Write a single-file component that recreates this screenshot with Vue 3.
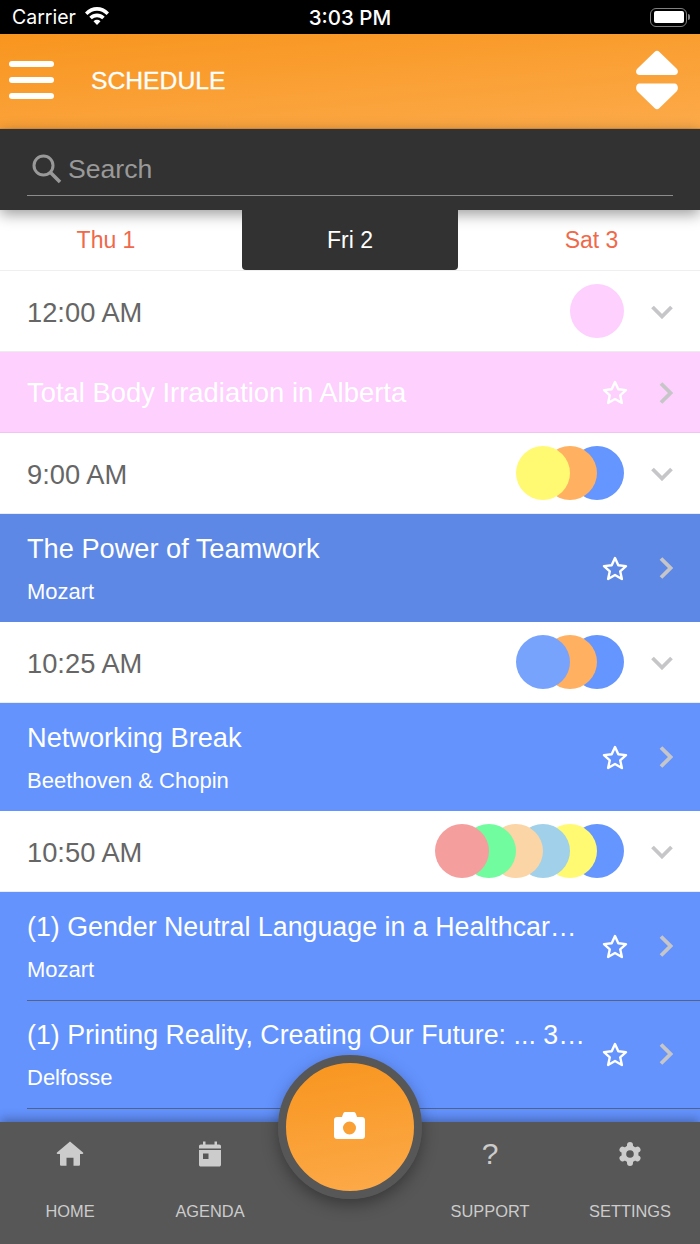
<template>
  <div class="page">
    <div class="status-bar">
      <div class="status-left">
        <span>Carrier</span>
        <svg class="wifi" width="26" height="19" viewBox="0 0 26 19">
          <path d="M1 6.500C8-.8 18-.8 25 6.500l-2.400 2.500C17 3.300 9 3.300 3.400 9z" fill="#fff" />
          <path d="M5.300 10.800c4.500-4.300 10.900-4.300 15.400 0l-2.500 2.500c-3.200-2.800-7.200-2.800-10.400 0z" fill="#fff" />
          <path d="M9.500 15.200c2.200-1.800 4.800-1.800 7 0L13 19z" fill="#fff" />
        </svg>
      </div>
      <span class="status-time">3:03 PM</span>
      <div class="battery">
        <div class="battery-body"><div class="battery-fill"></div></div>
        <div class="battery-tip"></div>
      </div>
    </div>

    <header class="app-header">
      <div class="burger"><i></i><i></i><i></i></div>
      <h1 class="app-title">SCHEDULE</h1>
      <svg class="sort" width="44" height="60" viewBox="0 0 44 60">
        <path d="M19.500 2a3.500 3.500 0 0 1 5 0L41.500 18.500C44 21 43 25 39.500 25H4.500C1 25 0 21 2.500 18.500z" fill="#fff" />
        <path d="M19.500 58a3.500 3.500 0 0 0 5 0L41.500 41.500C44 39 43 33.500 39.500 33.500H4.500C1 33.500 0 39 2.500 41.500z" fill="#fff" />
      </svg>
    </header>

    <div class="search-bar">
      <div class="search-field">
        <svg width="32" height="32" viewBox="0 0 32 32" fill="none" stroke="#999" stroke-width="3">
          <circle cx="13.500" cy="12.500" r="9.500" />
          <path d="M20.500 19.500L30 29" stroke-width="3.600" />
        </svg>
        <span>Search</span>
      </div>
    </div>

    <div class="day-tabs">
      <div v-for="d in days" :key="d" class="day-tab" :class="{ active: d === 'Fri 2' }">{{ d }}</div>
    </div>

    <div class="list">
      <template v-for="g in groups" :key="g.time">
        <div class="time-row">
          <span class="time">{{ g.time }}</span>
          <div class="dots">
            <span v-for="(c, i) in g.dots" :key="i" class="dot" :style="{ background: c, zIndex: g.dots.length - i }"></span>
          </div>
          <svg class="chev-down" width="22" height="14" viewBox="0 0 22 14" fill="none" stroke="#c6c6c8" stroke-width="3.800">
            <path d="M1.500 2L11 11.500 20.500 2" />
          </svg>
        </div>
        <div v-for="s in g.sessions" :key="s.title" class="session" :class="{ single: !s.sub }" :style="{ background: g.color }">
          <div class="session-inner" :class="{ ruled: s.ruled }">
            <div class="session-text">
              <div class="session-title">{{ s.title }}</div>
              <div v-if="s.sub" class="session-sub">{{ s.sub }}</div>
            </div>
            <svg class="star" width="26" height="25" viewBox="0 0 26 25" fill="none" stroke="#fff" stroke-width="2.400" stroke-linejoin="round">
              <path d="M13 2l3.300 7.300 7.700.800-5.800 5.200 1.700 7.700L13 19l-6.900 4 1.700-7.700L2 10.100l7.700-.800z" />
            </svg>
            <svg class="chev-right" width="14" height="22" viewBox="0 0 14 22" fill="none" stroke="#c6c6c8" stroke-width="3.800">
              <path d="M2 1.500L11.500 11 2 20.500" />
            </svg>
          </div>
        </div>
      </template>
    </div>

    <nav class="tab-bar">
      <div class="tab">
        <svg width="28" height="26" viewBox="0 0 28 26" fill="#ccc">
          <path d="M14 0.500L27 11.500c.6.700.2 1.500-.6 1.500H24v10.500c0 .8-.6 1.300-1.300 1.300H17.500v-8h-7v8H5.300C4.600 24.800 4 24.300 4 23.500V13H1.600C.8 13 .4 12.200 1 11.500z" />
        </svg>
        <span>HOME</span>
      </div>
      <div class="tab">
        <svg width="22" height="25" viewBox="0 0 22 25" fill="#ccc">
          <path d="M4 0h2.500v3H15.500V0H18v3h2.200C21.200 3 22 3.800 22 4.800V7H0V4.800C0 3.800.8 3 1.800 3H4z" />
          <path fill-rule="evenodd" d="M0 8.500h22v14.700c0 1-.8 1.800-1.800 1.800H1.800C.8 25 0 24.200 0 23.200zM4 12v5.500h5.500V12z" />
        </svg>
        <span>AGENDA</span>
      </div>
      <div class="tab-gap"></div>
      <div class="tab">
        <span class="help">?</span>
        <span>SUPPORT</span>
      </div>
      <div class="tab">
        <svg width="24" height="24" viewBox="0 0 24 24">
          <circle cx="12" cy="12" r="8.500" fill="#ccc" />
          <path d="M12 3V21M4.500 7.700L19.500 16.300M4.500 16.300L19.500 7.700" stroke="#ccc" stroke-width="6" stroke-linecap="round" />
          <circle cx="12" cy="12" r="3.800" fill="#575757" />
        </svg>
        <span>SETTINGS</span>
      </div>
      <button class="fab">
        <svg width="31" height="27" viewBox="0 0 31 27">
          <path fill="#fff" fill-rule="evenodd" d="M11.500 0h8c1.200 0 2 .7 2.400 1.700L23 5h5c1.700 0 3 1.300 3 3v16c0 1.700-1.300 3-3 3H3c-1.700 0-3-1.300-3-3V8c0-1.700 1.300-3 3-3h5l1.100-3.300C9.500.7 10.300 0 11.500 0zM15.500 9.500a6.500 6.500 0 1 0 0 13 6.500 6.500 0 0 0 0-13z" />
        </svg>
      </button>
    </nav>
  </div>
</template>

<script setup>
const days = ['Thu 1', 'Fri 2', 'Sat 3']

const groups = [
  {
    time: '12:00 AM',
    dots: ['#fdd0fe'],
    color: '#fdd0fe',
    sessions: [{ title: 'Total Body Irradiation in Alberta' }],
  },
  {
    time: '9:00 AM',
    dots: ['#fffa72', '#ffb060', '#6595fe'],
    color: '#5e88e6',
    sessions: [{ title: 'The Power of Teamwork', sub: 'Mozart' }],
  },
  {
    time: '10:25 AM',
    dots: ['#78a3fd', '#ffb060', '#6595fe'],
    color: '#6493fe',
    sessions: [{ title: 'Networking Break', sub: 'Beethoven & Chopin' }],
  },
  {
    time: '10:50 AM',
    dots: ['#f49e9e', '#70fc9f', '#fbd5a5', '#a0d0ea', '#fffa72', '#6595fe'],
    color: '#6493fe',
    sessions: [
      { title: '(1) Gender Neutral Language in a Healthcare Setting', sub: 'Mozart', ruled: true },
      { title: '(1) Printing Reality, Creating Our Future: ... 3D Printing', sub: 'Delfosse', ruled: true },
    ],
  },
]
</script>

<style>
body {
  margin: 0;
}
</style>

<style scoped>
.page {
  position: relative;
  display: flex;
  flex-direction: column;
  width: 700px;
  height: 1244px;
  overflow: hidden;
  background: #fff;
  font-family: "Liberation Sans", Arial, sans-serif;
}

.status-bar {
  display: flex;
  align-items: center;
  justify-content: space-between;
  height: 34px;
  flex: none;
  padding: 0 10px 0 12px;
  background: #000;
  color: #fff;
  font-family: Inter, "Liberation Sans", sans-serif;
  font-size: 19.500px;
  position: relative;
}

.status-left {
  display: flex;
  align-items: center;
  gap: 8px;
}

.wifi {
  margin-top: -3px;
}

.status-time {
  position: absolute;
  left: 0;
  right: 0;
  text-align: center;
  font-size: 20.500px;
  font-weight: 500;
}

.battery {
  display: flex;
  align-items: center;
  gap: 1px;
}

.battery-body {
  width: 37px;
  height: 19px;
  padding: 2.500px;
  box-sizing: border-box;
  border: 1.500px solid #808080;
  border-radius: 6px;
}

.battery-fill {
  height: 100%;
  background: #fff;
  border-radius: 2px;
}

.battery-tip {
  width: 2px;
  height: 6px;
  background: #808080;
  border-radius: 0 2px 2px 0;
}

.app-header {
  display: flex;
  align-items: center;
  height: 95px;
  flex: none;
  padding: 0 21px 2px 9px;
  background: linear-gradient(175deg, #f8951e 0%, #fcaa4a 100%);
  border-bottom: 1px solid #e8983c;
  box-sizing: border-box;
}

.burger {
  display: flex;
  flex-direction: column;
  gap: 9.500px;
  width: 45px;
}

.burger i {
  display: block;
  height: 6.500px;
  border-radius: 4px;
  background: #fff;
}

.app-title {
  flex: 1;
  margin: 2px 0 0 37px;
  font-size: 24.700px;
  font-weight: 400;
  color: #fff;
  -webkit-text-stroke: 0.3px #fff;
}

.search-bar {
  position: relative;
  z-index: 3;
  height: 81px;
  flex: none;
  box-sizing: border-box;
  padding: 14px 27px 0;
  background: #323232;
  box-shadow: 0 4px 14px rgba(0, 0, 0, 0.4);
}

.search-field {
  display: flex;
  align-items: center;
  gap: 6px;
  height: 53px;
  padding-left: 3px;
  box-sizing: border-box;
  border-bottom: 1.500px solid #8c8c8c;
  color: #999;
  font-size: 26.600px;
}

.day-tabs {
  display: grid;
  grid-template-columns: 242px 216px 242px;
  height: 61px;
  flex: none;
  box-sizing: border-box;
  border-bottom: 1px solid #efefef;
}

.day-tab {
  display: flex;
  align-items: center;
  justify-content: center;
  box-sizing: border-box;
  padding: 0 30px 0 0;
  font-size: 23px;
  color: #f0694a;
}

.day-tab:last-child {
  padding: 0 0 0 25px;
}

.day-tab.active {
  position: relative;
  z-index: 4;
  height: 60px;
  padding: 0;
  border-radius: 0 0 4px 4px;
  background: #323232;
  color: #fff;
}

.list {
  flex: 1;
  min-height: 0;
  overflow: hidden;
  background: #6493fe;
}

.time-row {
  display: flex;
  align-items: center;
  height: 81px;
  padding: 0 27px;
  background: #fff;
  box-sizing: border-box;
  box-shadow: inset 0 -1px 0 #ececec;
}

.time {
  flex: 1;
  padding-top: 2px;
  font-size: 27.300px;
  color: #666;
}

.dots {
  display: flex;
  margin: 0 27px 1px 0;
}

.dot {
  position: relative;
  width: 54px;
  height: 54px;
  border-radius: 50%;
  margin-left: -27px;
}

.dot:first-child {
  margin-left: 0;
}

.chev-down {
  flex: none;
}

.session {
  padding-left: 27px;
}

.session.single {
  box-shadow: inset 0 -1px 0 #efc4f0;
}

.session-inner {
  position: relative;
  display: flex;
  align-items: center;
  height: 108px;
  padding-right: 27px;
  box-sizing: border-box;
  color: #fff;
}

.session.single .session-inner {
  height: 81px;
}

.session-inner.ruled {
  box-shadow: 0 1px 0 #50648c;
}

.session-text {
  flex: 1;
  min-width: 0;
  margin-right: 15px;
}

.session-title {
  font-size: 27.200px;
  line-height: 34px;
  white-space: nowrap;
  overflow: hidden;
  text-overflow: ellipsis;
}

.single .session-title {
  font-size: 27.400px;
}

.ruled .session-title {
  font-size: 26.800px;
}

.session-sub {
  margin-top: 13px;
  font-size: 22px;
  line-height: 26px;
}

.star {
  flex: none;
  margin-right: 31px;
}

.chev-right {
  flex: none;
}

.tab-bar {
  position: relative;
  z-index: 5;
  display: flex;
  height: 122px;
  flex: none;
  background: #575757;
  box-shadow: 0 -3px 10px rgba(0, 0, 0, 0.3);
}

.tab {
  display: flex;
  flex-direction: column;
  align-items: center;
  width: 140px;
  height: 100%;
  padding-top: 19px;
  box-sizing: border-box;
  color: #ccc;
  font-size: 16.400px;
}

.tab svg,
.help {
  height: 26px;
  flex: none;
}

.tab span:last-child {
  margin-top: 34px;
  line-height: 20px;
}

.help {
  font-size: 30px;
  line-height: 26px;
}

.tab-gap {
  width: 140px;
}

.fab {
  position: absolute;
  left: 286px;
  top: -59px;
  width: 128px;
  height: 128px;
  box-sizing: content-box;
  padding: 0;
  margin: -8.500px;
  border: 8.500px solid #575757;
  border-radius: 50%;
  background: linear-gradient(170deg, #f8951e 0%, #fcaa4a 100%);
  box-shadow: 0 6px 16px rgba(0, 0, 0, 0.35);
  display: flex;
  align-items: center;
  justify-content: center;
}

.fab svg {
  margin-bottom: 3px;
}
</style>
